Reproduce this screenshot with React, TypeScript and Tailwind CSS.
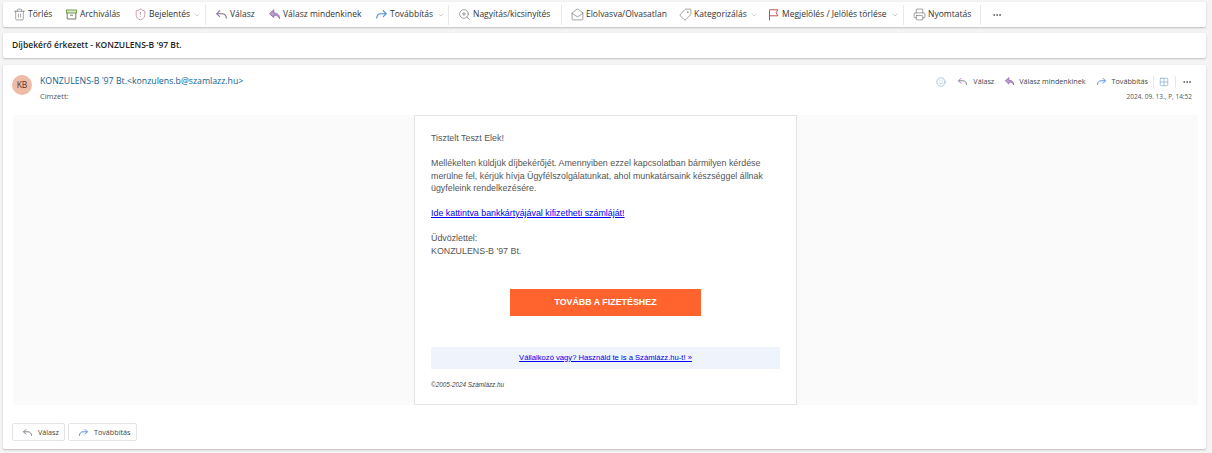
import React from "react";
import { Trash2, ShieldAlert, ZoomIn, MailOpen, Tag, Printer, MoreHorizontal, ChevronDown, Smile, Grid2x2 } from "lucide-react";

type ItemProps = { icon: React.ReactNode; label: string; chevron?: boolean; w: string };

function Tool({ icon, label, chevron, w }: ItemProps) {
  return (
    <div className={`flex items-center h-full shrink-0 ${w}`}>
      <span className="w-[14px] h-[14px] flex items-center justify-center shrink-0">{icon}</span>
      <span className="ml-[2px] text-[8.5px] text-[#333] whitespace-nowrap">{label}</span>
      {chevron && <ChevronDown size={8} strokeWidth={1.2} className="ml-auto shrink-0 text-[#888]" />}
    </div>
  );
}

function Sep() {
  return <div className="w-px h-[20px] bg-[#e8e8e8] shrink-0" />;
}

function ArchiveIcon() {
  return (
    <svg width="13" height="13" viewBox="0 0 13 13" fill="none">
      <rect x="1.5" y="2" width="10" height="3" fill="#dbe8c8" stroke="#6b9a45" strokeWidth="0.9" />
      <path d="M2.2 5v6h8.6V5" stroke="#6b6b5a" strokeWidth="0.9" />
      <path d="M5 7.2h3" stroke="#6b6b5a" strokeWidth="0.9" />
    </svg>
  );
}

function FlagIcon() {
  return (
    <svg width="13" height="13" viewBox="0 0 13 13" fill="none">
      <path d="M2.5 12.5V1.8h8.5L9 4.8l2 3H2.5" stroke="#c4505a" strokeWidth="1" />
    </svg>
  );
}

function ReplyIcon({ size = 13 }: { size?: number }) {
  return (
    <svg width={size} height={size} viewBox="0 0 13 13" fill="none" stroke="#9a6fb5" strokeWidth="1.1">
      <path d="M5 2.5 1.8 5.7 5 8.9" />
      <path d="M1.8 5.7h5.2c2.6 0 4.2 1.6 4.4 4.8" stroke="#777" />
    </svg>
  );
}

function ReplyAllIcon({ size = 13 }: { size?: number }) {
  return (
    <svg width={size} height={size} viewBox="0 0 13 13" fill="none">
      <path d="M5.8 1.8 1.5 5.7l4.3 3.9V7.3h1.4c2 0 3.4 1 4.3 3.4 0-3.6-1.7-5.6-5.7-5.7Z" fill="#b9a0cc" stroke="#8a5fa8" strokeWidth="0.8" />
    </svg>
  );
}

function ForwardIcon({ size = 13 }: { size?: number }) {
  return (
    <svg width={size} height={size} viewBox="0 0 13 13" fill="none" stroke="#4a8bd6" strokeWidth="1.1">
      <path d="M8 2.5l3.2 3.2L8 8.9" />
      <path d="M11.2 5.7H6c-2.6 0-4.2 1.6-4.4 4.8" />
    </svg>
  );
}

export default function App() {
  return (
    <div className="w-[1212px] h-[453px] bg-[#f4f4f4] overflow-hidden pt-[2px] pl-[3px] pr-[6px] flex flex-col font-['Open_Sans',sans-serif]">
      <div className="h-[25px] bg-white rounded-[2px] shadow-[0_1px_2px_rgba(0,0,0,0.22)] flex items-center pl-[9px] shrink-0">
        <Tool w="w-[52px]" icon={<Trash2 size={13} strokeWidth={1} className="text-[#555]" />} label="Törlés" />
        <Tool w="w-[69px]" icon={<ArchiveIcon />} label="Archiválás" />
        <Tool w="w-[72px] pr-[4px]" icon={<ShieldAlert size={13} strokeWidth={1} className="text-[#a4526e]" />} label="Bejelentés" chevron />
        <Sep />
        <div className="w-[8px] shrink-0" />
        <Tool w="w-[53px]" icon={<ReplyIcon />} label="Válasz" />
        <Tool w="w-[107px]" icon={<ReplyAllIcon />} label="Válasz mindenkinek" />
        <Tool w="w-[74px] pr-[3px]" icon={<ForwardIcon />} label="Továbbítás" chevron />
        <Sep />
        <div className="w-[8px] shrink-0" />
        <Tool w="w-[104px]" icon={<ZoomIn size={13} strokeWidth={1} className="text-[#555]" />} label="Nagyítás/kicsinyítés" />
        <Sep />
        <div className="w-[8px] shrink-0" />
        <Tool w="w-[108px]" icon={<MailOpen size={13} strokeWidth={1} className="text-[#555]" />} label="Elolvasva/Olvasatlan" />
        <Tool w="w-[88px] pr-[8px]" icon={<Tag size={13} strokeWidth={1} className="text-[#555] -scale-x-100" />} label="Kategorizálás" chevron />
        <Tool w="w-[137px] pr-[4px]" icon={<FlagIcon />} label="Megjelölés / Jelölés törlése" chevron />
        <Sep />
        <div className="w-[8px] shrink-0" />
        <Tool w="w-[68px]" icon={<Printer size={13} strokeWidth={1} className="text-[#555]" />} label="Nyomtatás" />
        <Sep />
        <div className="w-[11px] shrink-0" />
        <MoreHorizontal size={10} className="text-[#444]" />
      </div>

      <div className="mt-[6px] h-[25px] bg-white rounded-[2px] shadow-[0_1px_2px_rgba(0,0,0,0.22)] flex items-center pl-[9px] shrink-0">
        <span className="text-[8.5px] font-semibold text-[#242424]">Díjbekérő érkezett - KONZULENS-B '97 Bt.</span>
      </div>

      <div className="mt-[7px] h-[384px] bg-white rounded-[2px] shadow-[0_1px_2px_rgba(0,0,0,0.22)] flex flex-col shrink-0">
        <div className="h-[50px] flex pl-[9px] pr-[14px] pt-[10px] shrink-0">
          <div className="w-[20px] h-[20px] rounded-full bg-[#edbba6] flex items-center justify-center text-[8.5px] text-[#5a3222]">KB</div>
          <div className="ml-[8px] flex flex-col">
            <span className="text-[8.75px] leading-[12px] text-[#0f6292]">KONZULENS-B '97 Bt.&lt;konzulens.b@szamlazz.hu&gt;</span>
            <span className="mt-[4px] text-[7.5px] leading-[10px] text-[#555]">Címzett:</span>
          </div>
          <div className="ml-auto flex flex-col items-end">
            <div className="flex items-center h-[13px] text-[7.2px] text-[#444]">
              <Smile size={10} strokeWidth={1} className="text-[#3d7cb4]" />
              <span className="ml-[11px]"><ReplyIcon size={11} /></span>
              <span className="ml-[5px]">Válasz</span>
              <span className="ml-[10px]"><ReplyAllIcon size={11} /></span>
              <span className="ml-[4px]">Válasz mindenkinek</span>
              <span className="ml-[10px]"><ForwardIcon size={11} /></span>
              <span className="ml-[5px]">Továbbítás</span>
              <div className="ml-[5px] w-px h-[12px] bg-[#e8e8e8]" />
              <Grid2x2 size={10} strokeWidth={1} className="ml-[5px] text-[#3d7cb4]" />
              <div className="ml-[6px] w-px h-[12px] bg-[#e8e8e8]" />
              <MoreHorizontal size={10} className="ml-[6px] text-[#444]" />
            </div>
            <span className="mt-[4px] text-[6.5px] leading-[10px] text-[#555]">2024. 09. 13., P, 14:52</span>
          </div>
        </div>

        <div className="ml-[10px] mr-[8px] h-[290px] bg-[#fafafa] flex justify-center shrink-0">
          <div className="w-[383px] h-full bg-white border border-[#e4e4e4] pt-[16px] px-[16px] font-['Liberation_Sans',sans-serif] text-[8.87px] leading-[12.5px] text-[#555] flex flex-col">
            <p>Tisztelt Teszt Elek!</p>
            <p className="mt-[12.5px]">Mellékelten küldjük díjbekérőjét. Amennyiben ezzel kapcsolatban bármilyen kérdése merülne fel, kérjük hívja Ügyfélszolgálatunkat, ahol munkatársaink készséggel állnak ügyfeleink rendelkezésére.</p>
            <a className="mt-[12.5px] text-[#0000ee] underline">Ide kattintva bankkártyájával kifizetheti számláját!</a>
            <p className="mt-[12.5px]">Üdvözlettel:<br />KONZULENS-B '97 Bt.</p>
            <div className="mt-[32px] w-[191px] h-[27px] self-center bg-[#ff632e] flex items-center justify-center text-white font-bold text-[8.9px]">TOVÁBB A FIZETÉSHEZ</div>
            <div className="mt-[31px] h-[22px] bg-[#eff4fc] flex items-center justify-center text-[7.65px] text-[#0000ee] underline">Vállalkozó vagy? Használd te is a Számlázz.hu-t! »</div>
            <p className="mt-[12px] text-[6.35px] leading-[8px] italic text-[#444]">©2005-2024 Számlázz.hu</p>
          </div>
        </div>

        <div className="flex pl-[9px] gap-[3px] mt-[18px]">
          <div className="w-[53px] h-[18px] border border-[#e4e4e4] rounded-[2px] flex items-center pl-[9px] text-[7.2px] text-[#444]">
            <ReplyIcon size={11} /><span className="ml-[5px]">Válasz</span>
          </div>
          <div className="w-[69px] h-[18px] border border-[#e4e4e4] rounded-[2px] flex items-center pl-[9px] text-[7.2px] text-[#444]">
            <ForwardIcon size={11} /><span className="ml-[5px]">Továbbítás</span>
          </div>
        </div>
      </div>
    </div>
  );
}
